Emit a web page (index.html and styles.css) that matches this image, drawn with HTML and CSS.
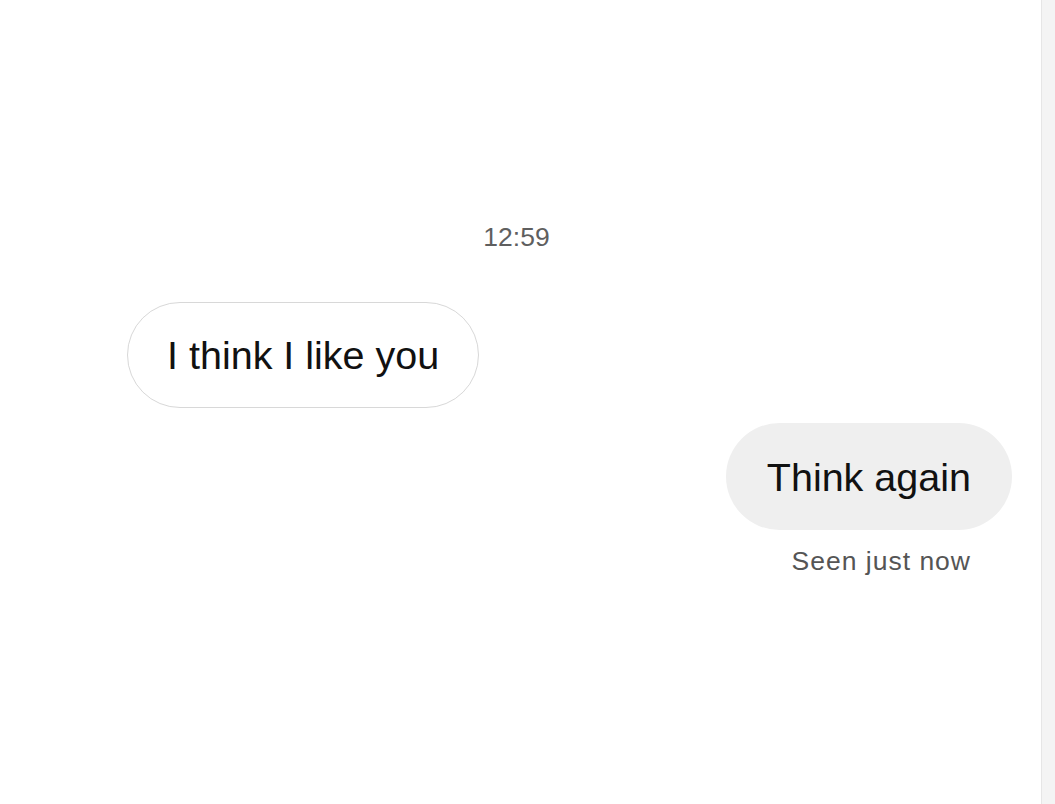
FILE: index.html
```html
<!DOCTYPE html>
<html>
<head>
<meta charset="utf-8">
<link rel="stylesheet" href="styles.css">
</head>
<body>
<div class="page">
  <main class="chat">
    <div class="time">12:59</div>
    <div class="row row-left">
      <div class="bubble bubble-in">I think I like you</div>
    </div>
    <div class="row row-right">
      <div class="bubble bubble-out">Think again</div>
    </div>
    <div class="seen">Seen just now</div>
  </main>
  <aside class="strip"></aside>
</div>
</body>
</html>
```
FILE: styles.css
```css
html, body {
  margin: 0;
  padding: 0;
  background: #ffffff;
}
body {
  font-family: "Liberation Sans", Arial, sans-serif;
  color: #111;
}
.page {
  display: flex;
  width: 1055px;
  height: 804px;
  overflow: hidden;
}
.chat {
  flex: 1;
  display: flex;
  flex-direction: column;
  padding-top: 222px;
}
.strip {
  width: 13px;
  background: #f4f4f4;
  border-left: 1px solid #e6e6e6;
}
.time {
  text-align: center;
  font-size: 26.5px;
  line-height: 30px;
  color: #5f5f5f;
  padding-right: 8px;
}
.row {
  display: flex;
}
.row-left {
  justify-content: flex-start;
  margin-top: 50px;
  padding-left: 127px;
}
.row-right {
  justify-content: flex-end;
  margin-top: 15px;
  padding-right: 29px;
}
.bubble {
  font-size: 39.5px;
  line-height: 44px;
  border-radius: 54px;
  white-space: nowrap;
}
.bubble-in {
  padding: 30px 39px 30px 39px;
  border: 1.5px solid #d8d8d8;
  background: #fff;
}
.bubble-out {
  padding: 31.5px 41px 31.5px 41px;
  background: #efefef;
}
.seen {
  align-self: flex-end;
  margin-top: 16px;
  margin-right: 70px;
  font-size: 26.5px;
  line-height: 30px;
  letter-spacing: 1px;
  color: #555;
}
```
